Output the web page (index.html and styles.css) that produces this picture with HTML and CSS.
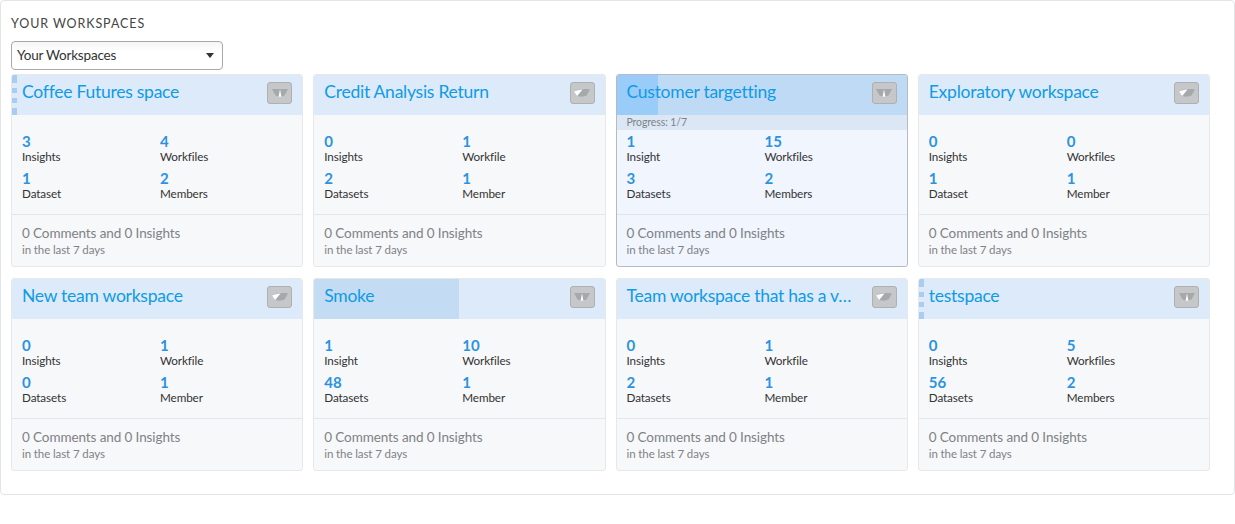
FILE: index.html
```html
<!DOCTYPE html>
<html lang="en">
<head>
<meta charset="utf-8">
<title>Your Workspaces</title>
<link rel="stylesheet" href="styles.css">
</head>
<body>
<svg class="defs" width="0" height="0" aria-hidden="true">
  <symbol id="fan" viewBox="0 0 16 10">
    <path d="M0 1H16L12.5 7.5Q8 9.8 3.5 7.5Z" fill="#a6a9ac"/>
    <path d="M6.6 8.7L8 1.5L9.4 8.7Q8 9 6.6 8.7Z" fill="#fff"/>
  </symbol>
  <symbol id="fan-tilt" viewBox="0 0 16 10">
    <path d="M0 3.5C4 1 10 .5 16 1.5L12.5 7.5Q8 9.5 3.5 8Z" fill="#a6a9ac"/>
    <path d="M0 3.5C2.5 2.2 5 1.6 8.5 1.4L3.2 8Z" fill="#fff"/>
  </symbol>
</svg>
<main class="panel">
  <h1 class="heading">YOUR WORKSPACES</h1>
  <div class="select"><span>Your Workspaces</span><i class="caret"></i></div>
  <div class="grid">

    <article class="card">
      <header class="head"><i class="seg s1"></i><i class="seg s2"></i><i class="seg s3"></i><i class="seg s4"></i>
        <a class="title">Coffee Futures space</a><button class="btn"><svg class="ico"><use href="#fan"/></svg></button></header>
      <div class="stats">
        <div><b>3</b><span>Insights</span></div><div><b>4</b><span>Workfiles</span></div>
        <div><b>1</b><span>Dataset</span></div><div><b>2</b><span>Members</span></div>
      </div>
      <footer class="foot"><p>0 Comments and 0 Insights</p><small>in the last 7 days</small></footer>
    </article>

    <article class="card">
      <header class="head"><a class="title">Credit Analysis Return</a><button class="btn"><svg class="ico"><use href="#fan-tilt"/></svg></button></header>
      <div class="stats">
        <div><b>0</b><span>Insights</span></div><div><b>1</b><span>Workfile</span></div>
        <div><b>2</b><span>Datasets</span></div><div><b>1</b><span>Member</span></div>
      </div>
      <footer class="foot"><p>0 Comments and 0 Insights</p><small>in the last 7 days</small></footer>
    </article>

    <article class="card active">
      <header class="head"><i class="fill fill-14"></i><a class="title">Customer targetting</a><button class="btn"><svg class="ico"><use href="#fan"/></svg></button></header>
      <div class="progress">Progress: 1/7</div>
      <div class="stats">
        <div><b>1</b><span>Insight</span></div><div><b>15</b><span>Workfiles</span></div>
        <div><b>3</b><span>Datasets</span></div><div><b>2</b><span>Members</span></div>
      </div>
      <footer class="foot"><p>0 Comments and 0 Insights</p><small>in the last 7 days</small></footer>
    </article>

    <article class="card">
      <header class="head"><a class="title">Exploratory workspace</a><button class="btn"><svg class="ico"><use href="#fan-tilt"/></svg></button></header>
      <div class="stats">
        <div><b>0</b><span>Insights</span></div><div><b>0</b><span>Workfiles</span></div>
        <div><b>1</b><span>Dataset</span></div><div><b>1</b><span>Member</span></div>
      </div>
      <footer class="foot"><p>0 Comments and 0 Insights</p><small>in the last 7 days</small></footer>
    </article>

    <article class="card">
      <header class="head"><a class="title">New team workspace</a><button class="btn"><svg class="ico"><use href="#fan-tilt"/></svg></button></header>
      <div class="stats">
        <div><b>0</b><span>Insights</span></div><div><b>1</b><span>Workfile</span></div>
        <div><b>0</b><span>Datasets</span></div><div><b>1</b><span>Member</span></div>
      </div>
      <footer class="foot"><p>0 Comments and 0 Insights</p><small>in the last 7 days</small></footer>
    </article>

    <article class="card">
      <header class="head"><i class="fill fill-50"></i><a class="title">Smoke</a><button class="btn"><svg class="ico"><use href="#fan"/></svg></button></header>
      <div class="stats">
        <div><b>1</b><span>Insight</span></div><div><b>10</b><span>Workfiles</span></div>
        <div><b>48</b><span>Datasets</span></div><div><b>1</b><span>Member</span></div>
      </div>
      <footer class="foot"><p>0 Comments and 0 Insights</p><small>in the last 7 days</small></footer>
    </article>

    <article class="card">
      <header class="head"><a class="title">Team workspace that has a v…</a><button class="btn"><svg class="ico"><use href="#fan-tilt"/></svg></button></header>
      <div class="stats">
        <div><b>0</b><span>Insights</span></div><div><b>1</b><span>Workfile</span></div>
        <div><b>2</b><span>Datasets</span></div><div><b>1</b><span>Member</span></div>
      </div>
      <footer class="foot"><p>0 Comments and 0 Insights</p><small>in the last 7 days</small></footer>
    </article>

    <article class="card">
      <header class="head"><i class="seg s1"></i><i class="seg s2"></i><i class="seg s3"></i><i class="seg s4"></i>
        <a class="title">testspace</a><button class="btn"><svg class="ico"><use href="#fan"/></svg></button></header>
      <div class="stats">
        <div><b>0</b><span>Insights</span></div><div><b>5</b><span>Workfiles</span></div>
        <div><b>56</b><span>Datasets</span></div><div><b>2</b><span>Members</span></div>
      </div>
      <footer class="foot"><p>0 Comments and 0 Insights</p><small>in the last 7 days</small></footer>
    </article>

  </div>
</main>
</body>
</html>
```
FILE: styles.css
```css
* { box-sizing: border-box; }
html, body { margin: 0; padding: 0; background: #fff; }
body { width: 1235px; height: 524px; overflow: hidden; font-family: "Lato", "Open Sans", sans-serif; color: #333; }
.defs { position: absolute; }
.panel {
  width: 1235px; height: 495px;
  border: 1px solid #e3e4e6; border-radius: 4px;
  padding: 14px 24px 0 10px;
}
.heading {
  margin: 0; height: 26px; line-height: 17px;
  font-size: 12.5px; font-weight: 400; letter-spacing: .9px; color: #444;
}
.select {
  width: 212px; height: 29px;
  display: flex; align-items: center; justify-content: space-between;
  padding: 0 8px 2px 5px;
  border: 1px solid #a9a9a9; border-radius: 4px;
  background: linear-gradient(#f6f6f6, #fff 40%);
  font-size: 13.5px; letter-spacing: -.2px; color: #333;
}
.caret { width: 0; height: 0; margin-top: 2px; border-left: 4.5px solid transparent; border-right: 4.5px solid transparent; border-top: 5px solid #333; }
.grid {
  margin-top: 4px;
  display: grid;
  grid-template-columns: repeat(4, 292.25px);
  grid-auto-rows: 193px;
  column-gap: 10px; row-gap: 11px;
}
.card {
  display: flex; flex-direction: column;
  border: 1px solid #e6e8ea; border-radius: 3px;
  background: #f7f8fa;
  overflow: hidden;
}
.head {
  position: relative; flex: none;
  height: 40px;
  display: flex; align-items: flex-start; justify-content: space-between;
  padding: 0 10px;
  background: #dceafa;
}
.title {
  position: relative; min-width: 0; margin-top: 5px;
  font-size: 17.5px; letter-spacing: -.25px; line-height: 24px; color: #0f9be6;
  white-space: nowrap;
}
.btn {
  position: relative; flex: none;
  width: 25px; height: 22px; margin: 7px 0 0 10px; padding: 0;
  display: flex; align-items: center; justify-content: center;
  border: 1px solid #aeb0b2; border-radius: 3px;
  background: #c5c7c9;
}
.ico { width: 16px; height: 10px; display: block; }
.fill { position: absolute; left: 0; top: 0; bottom: 0; }
.fill-14 { width: 14.3%; background: #9accfa; }
.fill-50 { width: 50%; background: #c3dbf3; }
.seg { position: absolute; left: 0; width: 5px; background: #a9cdf2; }
.s1 { top: 0; height: 8px; }
.s2 { top: 13px; height: 5px; }
.s3 { top: 23px; height: 5px; }
.s4 { top: 33px; height: 7px; }
.progress {
  flex: none; height: 15px; padding-left: 10px;
  background: #dbe7f5;
  font-size: 10.5px; letter-spacing: -.1px; line-height: 15px; color: #7d8288;
}
.stats {
  flex: none;
  display: grid; grid-template-columns: 138px 1fr; grid-auto-rows: 30px;
  row-gap: 7px;
  height: 100px;
  padding: 19px 10px 0;
  border-bottom: 1px solid #e4e6e9;
}
.active .stats { height: 85px; padding-top: 4px; }
.stats div { display: flex; flex-direction: column; }
.stats b { font-size: 15px; line-height: 15px; font-weight: 700; color: #2b93e0; }
.stats span { font-size: 11.7px; letter-spacing: -.1px; line-height: 15px; color: #333; }
.foot { padding: 8px 10px 0; color: #7f8286; }
.foot p { margin: 0; font-size: 13.5px; letter-spacing: -.1px; line-height: 20px; }
.foot small { display: block; margin-top: -1px; font-size: 11.5px; letter-spacing: -.1px; line-height: 15px; color: #7f8286; }
.active { border-color: #b4bbc5; background: #f0f5fe; }
.active .head { background: #bedaf5; }
.active .stats { border-bottom-color: #e0e5ec; }
```
